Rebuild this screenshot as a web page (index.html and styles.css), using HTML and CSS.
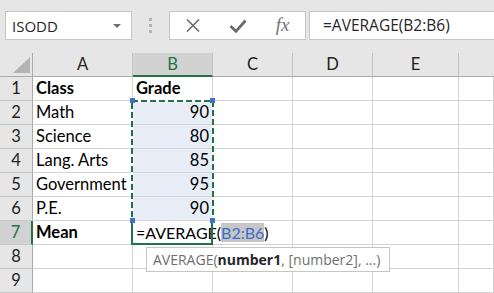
FILE: index.html
```html
<!DOCTYPE html>
<html>
<head>
<meta charset="utf-8">
<link rel="stylesheet" href="styles.css">
</head>
<body>
<div class="toolbar">
  <div class="namebox"><span class="nb-text">ISODD</span><span class="caret"></span></div>
  <div class="grip"><i></i><i></i><i></i></div>
  <div class="buttons">
    <span class="btn"><svg width="14" height="13" viewBox="0 0 14 13"><path d="M1 0.5 L13 12.5 M13 0.5 L1 12.5" stroke="#6b6b6b" stroke-width="1.6" fill="none"/></svg></span>
    <span class="btn"><svg width="18" height="14" viewBox="0 0 18 14"><path d="M1.5 7 L7 12.3 L16.5 1.5" stroke="#6b6b6b" stroke-width="2.8" fill="none"/></svg></span>
    <span class="btn fx">fx</span>
  </div>
  <div class="formula">=AVERAGE(B2:B6)</div>
</div>
<div class="sheet">
  <div class="spacer"></div>
  <div class="corner"><span class="tri"></span></div>
  <div class="ch">A</div>
  <div class="ch active-col">B</div>
  <div class="ch">C</div>
  <div class="ch">D</div>
  <div class="ch">E</div>
  <div class="ch last"></div>

  <div class="rh">1</div><div class="c b">Class</div><div class="c b">Grade</div><div class="c"></div><div class="c"></div><div class="c"></div><div class="c"></div>
  <div class="rh">2</div><div class="c">Math</div><div class="c sel num">90</div><div class="c"></div><div class="c"></div><div class="c"></div><div class="c"></div>
  <div class="rh">3</div><div class="c">Science</div><div class="c sel num">80</div><div class="c"></div><div class="c"></div><div class="c"></div><div class="c"></div>
  <div class="rh">4</div><div class="c">Lang. Arts</div><div class="c sel num">85</div><div class="c"></div><div class="c"></div><div class="c"></div><div class="c"></div>
  <div class="rh">5</div><div class="c">Government</div><div class="c sel num">95</div><div class="c"></div><div class="c"></div><div class="c"></div><div class="c"></div>
  <div class="rh">6</div><div class="c">P.E.</div><div class="c sel num">90</div><div class="c"></div><div class="c"></div><div class="c"></div><div class="c"></div>
  <div class="rh active-row">7</div><div class="c b">Mean</div><div class="c edit">=AVERAGE(<span class="ref">B2:B6</span>)</div><div class="c"></div><div class="c"></div><div class="c"></div><div class="c"></div>
  <div class="rh">8</div><div class="c"></div><div class="c"></div><div class="c"></div><div class="c"></div><div class="c"></div><div class="c"></div>
  <div class="rh">9</div><div class="c"></div><div class="c"></div><div class="c"></div><div class="c"></div><div class="c"></div><div class="c"></div>

  <svg class="ants" width="83" height="123" viewBox="0 0 83 123">
    <rect x="1" y="1" width="81" height="121" fill="none" stroke="#ffffff" stroke-width="2"/>
    <rect x="1" y="1" width="81" height="121" fill="none" stroke="#217346" stroke-width="2" stroke-dasharray="6 3"/>
  </svg>
  <div class="active-cell"></div>
  <span class="handle h1"></span>
  <span class="handle h2"></span>
  <span class="handle h3"></span>
  <span class="handle h4"></span>
  <div class="tip">AVERAGE(<b>number1</b>, [number2], ...)</div>
</div>
</body>
</html>
```
FILE: styles.css
```css
* { box-sizing: border-box; }
html, body { margin: 0; padding: 0; background: #ffffff; }
body { width: 494px; height: 293px; overflow: hidden; font-family: "Open Sans", "Noto Sans", sans-serif; }

.toolbar {
  height: 41px;
  background: #e6e6e6;
  display: flex;
  align-items: flex-start;
  padding: 11px 0 0 5px;
}
.namebox {
  width: 127px;
  height: 29px;
  background: #fff;
  border: 1px solid #c6c6c6;
  display: flex;
  align-items: center;
  padding-left: 6px;
  position: relative;
}
.nb-text { font-size: 15px; color: #262626; flex: 1; }
.caret {
  width: 0; height: 0;
  border-left: 4px solid transparent;
  border-right: 4px solid transparent;
  border-top: 4px solid #6f6f6f;
  margin-right: 10px;
}
.grip {
  width: 37px;
  height: 29px;
  display: flex;
  flex-direction: column;
  align-items: center;
  justify-content: center;
  gap: 3px;
}
.grip i { display: block; width: 3px; height: 3px; background: #b3b3b3; }
.buttons {
  width: 137px;
  height: 29px;
  background: #fff;
  border: 1px solid #c6c6c6;
  display: flex;
  align-items: center;
}
.btn { width: 45px; display: flex; justify-content: center; align-items: center; }
.fx {
  font-family: "Liberation Serif", serif;
  font-style: italic;
  font-size: 19px;
  color: #737373;
  line-height: 20px;
  padding-bottom: 2px;
}
.formula {
  flex: 1;
  margin-left: 3px;
  height: 29px;
  background: #fff;
  border: 1px solid #c6c6c6;
  border-right: none;
  padding-left: 13px;
  font-size: 15.5px;
  line-height: 27px;
  color: #262626;
  white-space: nowrap;
}

.sheet {
  position: relative;
  display: grid;
  grid-template-columns: 33px 100px 80px 80px 80px 86px 35px;
  grid-template-rows: 12px 24px repeat(9, 24px);
  font-family: Lato, "Open Sans", sans-serif;
  font-size: 16.5px;
  color: #000;
}
.spacer { grid-column: 1 / -1; background: #e6e6e6; }
.corner {
  background: #e6e6e6;
  border-right: 1px solid #ababab;
  border-bottom: 1px solid #ababab;
  position: relative;
}
.tri {
  position: absolute;
  right: 2px;
  bottom: 3px;
  width: 0; height: 0;
  border-left: 17px solid transparent;
  border-bottom: 16px solid #b4b4b4;
}
.ch {
  background: #e6e6e6;
  border-right: 1px solid #c2c2c2;
  border-bottom: 1px solid #ababab;
  text-align: center;
  line-height: 23px;
  color: #222;
}
.ch.last { border-right: none; }
.ch.active-col {
  background: #d2d2d2;
  color: #217346;
  border-bottom: 2px solid #217346;
}
.rh {
  background: #e6e6e6;
  border-right: 1px solid #ababab;
  border-bottom: 1px solid #c8c8c8;
  text-align: center;
  line-height: 23px;
  color: #222;
}
.rh.active-row {
  background: #d2d2d2;
  color: #217346;
  border-right: 2px solid #217346;
}
.c {
  border-right: 1px solid #d4d4d4;
  border-bottom: 1px solid #d4d4d4;
  padding: 0 3px 0 3px;
  line-height: 23px;
  white-space: nowrap;
  overflow: visible;
}
.c.b { font-weight: 700; }
.c.num { text-align: right; }
.c.sel { background: #e8edf7; }
.c.edit { position: relative; z-index: 1; background: #fff; font-size: 16px; }
.ref { color: #3d6fc6; background: #c6c6c6; }

.ants { position: absolute; left: 131px; top: 59px; }
.active-cell {
  position: absolute;
  left: 131px;
  top: 179px;
  width: 82px;
  height: 25px;
  border: 2px solid #217346;
  border-top: none;
  z-index: 2;
}
.handle {
  position: absolute;
  width: 5px;
  height: 5px;
  background: #3e72c9;
  z-index: 3;
}
.h1 { left: 130px; top: 57px; }
.h2 { left: 210px; top: 57px; }
.h3 { left: 130px; top: 177px; }
.h4 { left: 210px; top: 177px; }
.tip {
  position: absolute;
  left: 146px;
  top: 206px;
  width: 244px;
  height: 25px;
  background: #fff;
  border: 1px solid #c6c6c6;
  font-family: "Open Sans", "Noto Sans", sans-serif;
  font-size: 14px;
  line-height: 23px;
  padding-left: 6px;
  color: #6e6e6e;
  white-space: nowrap;
  z-index: 4;
}
.tip b { color: #262626; font-weight: 700; }
```
